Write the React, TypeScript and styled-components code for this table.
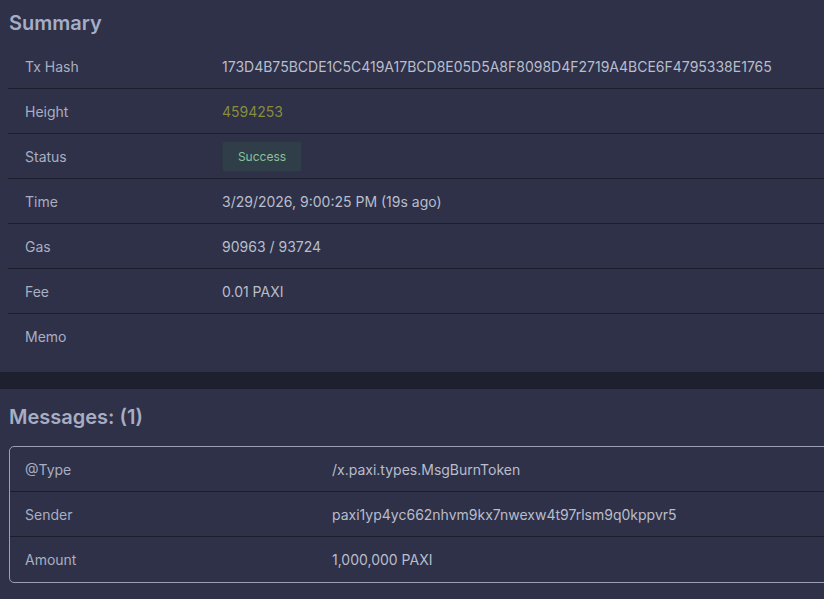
import styled, { createGlobalStyle } from 'styled-components';

const GlobalStyle = createGlobalStyle`
  html, body {
    margin: 0;
    padding: 0;
    background: #1e2030;
    overflow: hidden;
  }
  body {
    font-family: Inter, "Noto Sans", sans-serif;
    font-size: 14px;
    -webkit-font-smoothing: antialiased;
  }
`;

type Field = {
  label: string;
  value?: string;
  kind?: 'text' | 'height' | 'status';
};

const summary: Field[] = [
  { label: 'Tx Hash', value: '173D4B75BCDE1C5C419A17BCD8E05D5A8F8098D4F2719A4BCE6F4795338E1765' },
  { label: 'Height', value: '4594253', kind: 'height' },
  { label: 'Status', value: 'Success', kind: 'status' },
  { label: 'Time', value: '3/29/2026, 9:00:25 PM (19s ago)' },
  { label: 'Gas', value: '90963 / 93724' },
  { label: 'Fee', value: '0.01 PAXI' },
  { label: 'Memo', value: '' },
];

const message: Field[] = [
  { label: '@Type', value: '/x.paxi.types.MsgBurnToken' },
  { label: 'Sender', value: 'paxi1yp4yc662nhvm9kx7nwexw4t97rlsm9q0kppvr5' },
  { label: 'Amount', value: '1,000,000 PAXI' },
];

const renderValue = (field: Field) => {
  if (field.kind === 'status') return <Badge>{field.value}</Badge>;
  if (field.kind === 'height') return <HeightLink>{field.value}</HeightLink>;
  return field.value;
};

export default function App() {
  return (
    <>
      <GlobalStyle />
      <Page>
        <Card top={9} bottom={13}>
          <Title>Summary</Title>
          <SummaryTable>
            {summary.map((field, i) => (
              <SummaryRow key={field.label} last={i === summary.length - 1}>
                <Label>{field.label}</Label>
                <Value>{renderValue(field)}</Value>
              </SummaryRow>
            ))}
          </SummaryTable>
        </Card>
        <Card top={14} bottom={16}>
          <Title>Messages: (1)</Title>
          <MessageBox>
            {message.map((field, i) => (
              <MessageRow key={field.label} last={i === message.length - 1}>
                <Label>{field.label}</Label>
                <Value>{field.value}</Value>
              </MessageRow>
            ))}
          </MessageBox>
        </Card>
      </Page>
    </>
  );
}

const Page = styled.div`
  width: 1100px;
  display: flex;
  flex-direction: column;
  gap: 17px;
`;

const Card = styled.section<{ top: number; bottom: number }>`
  background: #2e3148;
  padding: ${({ top }) => top}px 0 ${({ bottom }) => bottom}px 8px;
`;

const Title = styled.h2`
  margin: 0 0 0 1px;
  font-size: 20px;
  line-height: 28px;
  font-weight: 600;
  color: #a7adc4;
`;

const SummaryTable = styled.div`
  margin-top: 7px;
  display: flex;
  flex-direction: column;
`;

const SummaryRow = styled.div<{ last?: boolean }>`
  display: grid;
  grid-template-columns: 197px 1fr;
  align-items: center;
  height: 45px;
  box-sizing: border-box;
  padding-left: 17px;
  border-bottom: ${({ last }) => (last ? 'none' : '1px solid #1b1d2b')};
`;

const Label = styled.div`
  color: #a9aec2;
  white-space: nowrap;
`;

const Value = styled.div`
  color: #b9bdcc;
  white-space: nowrap;
`;

const HeightLink = styled.span`
  color: #878c3e;
`;

const Badge = styled.span`
  display: inline-flex;
  align-items: center;
  justify-content: center;
  width: 80px;
  height: 31px;
  box-sizing: border-box;
  background: #2f3e48;
  border: 1px solid #2a3640;
  border-radius: 2px;
  color: #8cc29c;
  font-size: 12px;
`;

const MessageBox = styled.div`
  margin: 15px 0 0 1px;
  border: 1px solid #9a9fb4;
  border-radius: 5px;
  display: flex;
  flex-direction: column;
`;

const MessageRow = styled.div<{ last?: boolean }>`
  display: grid;
  grid-template-columns: 307px 1fr;
  align-items: center;
  height: 45px;
  box-sizing: border-box;
  padding-left: 15px;
  border-bottom: ${({ last }) => (last ? 'none' : '1px solid #1b1d2b')};
`;
